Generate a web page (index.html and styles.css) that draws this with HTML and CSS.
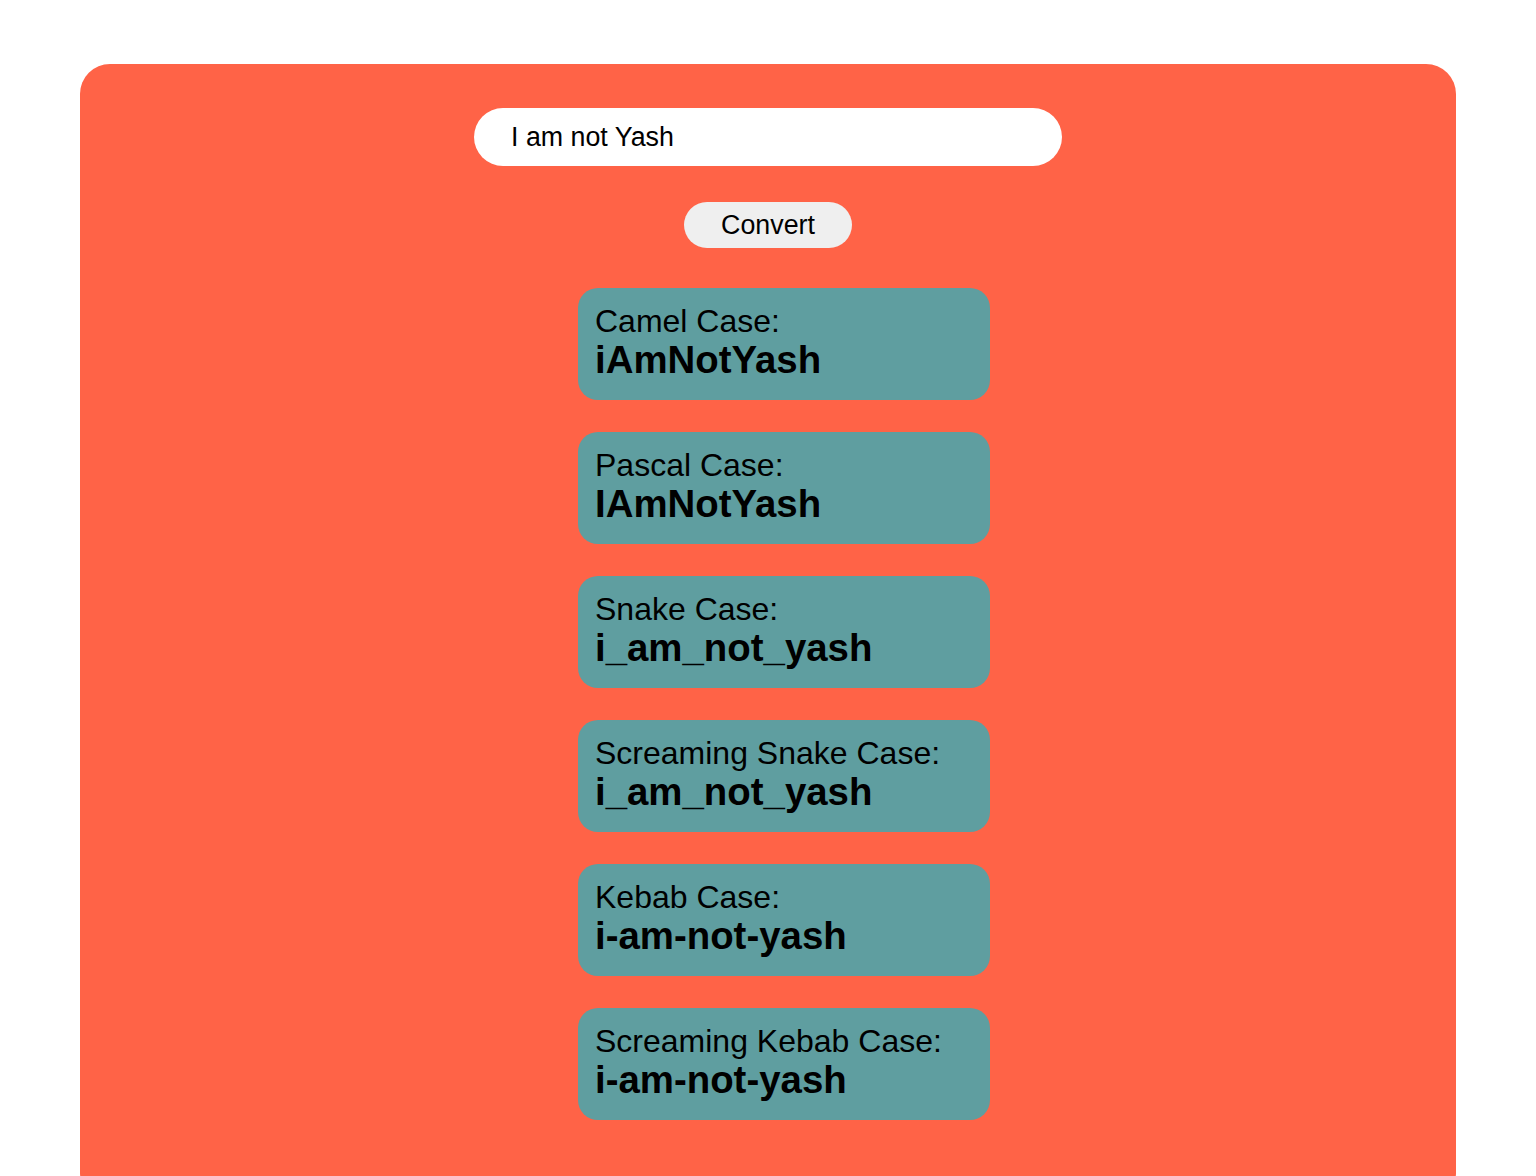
FILE: index.html
```html
<!DOCTYPE html>
<html lang="en">
<head>
<meta charset="utf-8">
<title>Case Converter</title>
<link rel="stylesheet" href="styles.css">
</head>
<body>
<main class="panel">
  <input class="text-input" type="text" value="I am not Yash">
  <button class="convert-btn" type="button">Convert</button>
  <div class="results">
    <div class="card">
      <div class="label">Camel Case:</div>
      <div class="value">iAmNotYash</div>
    </div>
    <div class="card">
      <div class="label">Pascal Case:</div>
      <div class="value">IAmNotYash</div>
    </div>
    <div class="card">
      <div class="label">Snake Case:</div>
      <div class="value">i_am_not_yash</div>
    </div>
    <div class="card">
      <div class="label">Screaming Snake Case:</div>
      <div class="value">i_am_not_yash</div>
    </div>
    <div class="card">
      <div class="label">Kebab Case:</div>
      <div class="value">i-am-not-yash</div>
    </div>
    <div class="card">
      <div class="label">Screaming Kebab Case:</div>
      <div class="value">i-am-not-yash</div>
    </div>
  </div>
</main>
</body>
</html>
```
FILE: styles.css
```css
html, body {
  margin: 0;
  padding: 0;
  background: #ffffff;
}

body {
  font-family: "Liberation Sans", Arial, sans-serif;
  color: #000;
  padding: 64px 80px 0;
}

.panel {
  background: #ff6347;
  border-radius: 30px;
  padding: 44px 0 84px;
  display: flex;
  flex-direction: column;
  align-items: center;
}

.text-input {
  box-sizing: border-box;
  width: 588px;
  height: 58px;
  border: none;
  outline: none;
  border-radius: 29px;
  background: #fff;
  padding: 0 37px;
  font-family: "Liberation Sans", Arial, sans-serif;
  font-size: 26.8px;
  color: #000;
  margin: 0;
}

.convert-btn {
  box-sizing: border-box;
  margin-top: 36px;
  width: 168px;
  height: 46px;
  border: none;
  border-radius: 23px;
  background: #efefef;
  font-family: "Liberation Sans", Arial, sans-serif;
  font-size: 26.8px;
  color: #000;
  padding: 0;
}

.results {
  margin-top: 40px;
  padding-left: 32px;
  display: flex;
  flex-direction: column;
  gap: 32px;
}

.card {
  box-sizing: border-box;
  width: 412px;
  height: 112px;
  background: #5f9ea0;
  border-radius: 20px;
  padding: 16px 17px;
}

.label {
  font-size: 32px;
  line-height: 1.09;
}

.value {
  font-size: 38.4px;
  line-height: 1.1;
  font-weight: bold;
}
```
